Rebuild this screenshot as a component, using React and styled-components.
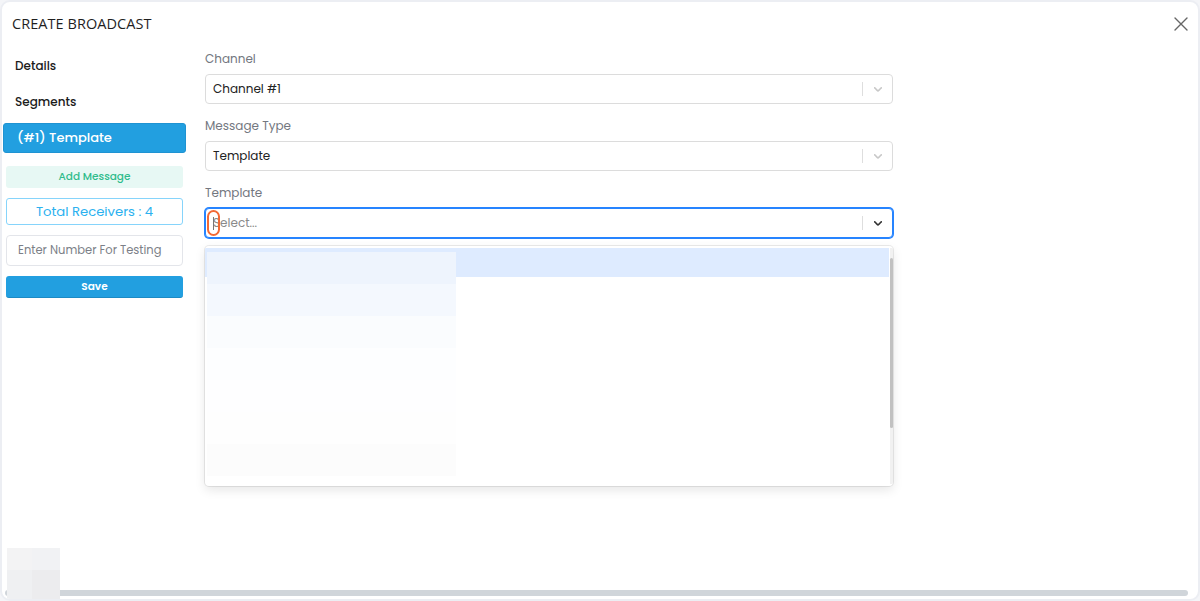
import React from "react";
import styled, { createGlobalStyle } from "styled-components";

const Global = createGlobalStyle`
  html, body { margin: 0; padding: 0; background: #f4f5f8; }
  body { font-family: "Poppins", "Noto Sans", "Open Sans", sans-serif; }
  * { box-sizing: border-box; }
`;

const Modal = styled.div`
  position: relative;
  width: 1200px;
  height: 601px;
  background: #fff;
  border: 2px solid #eceef3;
  border-radius: 10px;
  display: flex;
  flex-direction: column;
  overflow: hidden;
`;

const Header = styled.div`
  height: 43px;
  display: flex;
  align-items: center;
  justify-content: space-between;
  padding: 0 9px 0 10px;
`;

const Title = styled.h1`
  margin: 0;
  font-family: "Open Sans", sans-serif;
  font-size: 14.5px;
  font-weight: 400;
  color: #1f1f1f;
  letter-spacing: 0.05px;
`;

const Close = styled.button`
  border: 0;
  background: none;
  padding: 0;
  width: 16px;
  height: 16px;
  display: flex;
  align-items: center;
  justify-content: center;
  color: #666;
  cursor: pointer;
`;

const Body = styled.div`
  flex: 1;
  display: flex;
  min-height: 0;
`;

const Sidebar = styled.div`
  width: 184px;
  padding: 3px 0 0 1px;
  display: flex;
  flex-direction: column;
`;

const NavItem = styled.div`
  height: ${(p) => (p.$active ? "30px" : "36px")};
  display: flex;
  align-items: center;
  padding-left: ${(p) => (p.$active ? "13px" : "12px")};
  font-size: ${(p) => (p.$active ? "13px" : "12px")};
  font-weight: 500;
  color: ${(p) => (p.$active ? "#fff" : "#1b1b1b")};
  background: ${(p) => (p.$active ? "#229fe0" : "transparent")};
  border-radius: ${(p) => (p.$active ? "3px" : "0")};
  border: ${(p) => (p.$active ? "1px solid #1f93d2" : "0")};
  margin-top: ${(p) => (p.$active ? "3px" : "0")};
`;

const Actions = styled.div`
  display: flex;
  flex-direction: column;
  gap: 10px;
  padding: 13px 3px 0 3px;
`;

const AddMessage = styled.button`
  height: 22px;
  border: 0;
  border-radius: 3px;
  background: #e7f8f4;
  color: #2fbc8c;
  font-family: inherit;
  font-size: 10.5px;
  font-weight: 500;
`;

const Receivers = styled.div`
  height: 27px;
  border: 1px solid #86d4fb;
  border-radius: 3px;
  display: flex;
  align-items: center;
  justify-content: center;
  color: #2bb1ef;
  font-size: 13.2px;
`;

const TestInput = styled.input`
  height: 31px;
  border: 1px solid #e3e5ea;
  border-radius: 4px;
  padding: 0 11px;
  font-family: inherit;
  font-size: 11.5px;
  color: #333;
  outline: none;
  &::placeholder { color: #7c7f87; }
`;

const SaveButton = styled.button`
  height: 22px;
  border: 0;
  border-radius: 3px;
  background: #229fe0;
  border-bottom: 1px solid #1c8ac4;
  color: #fff;
  font-family: inherit;
  font-size: 10.5px;
  font-weight: 600;
`;

const Main = styled.div`
  flex: 1;
  padding: 6px 0 0 19px;
`;

const Form = styled.div`
  width: 688px;
  display: flex;
  flex-direction: column;
`;

const Label = styled.div`
  font-size: 12px;
  color: #737780;
  line-height: 16px;
  margin: ${(p) => (p.$first ? "0" : "14px")} 0 7px 0;
`;

const SelectBox = styled.div`
  position: relative;
  height: 30px;
  border: 1px solid ${(p) => (p.$focused ? "#2684ff" : "#dcdcdc")};
  box-shadow: ${(p) => (p.$focused ? "0 0 0 1px #2684ff" : "none")};
  border-radius: 4px;
  display: flex;
  align-items: center;
  background: #fff;
`;

const Value = styled.div`
  flex: 1;
  padding-left: 7px;
  font-size: 12px;
  color: ${(p) => (p.$placeholder ? "#8a8a8a" : "#222")};
`;

const Sep = styled.span`
  width: 1px;
  align-self: stretch;
  margin: 7px 0;
  background: #dedede;
`;

const Indicator = styled.div`
  width: 29px;
  display: flex;
  align-items: center;
  justify-content: center;
  color: ${(p) => (p.$dark ? "#333" : "#c8c8c8")};
`;

const Highlight = styled.span`
  position: absolute;
  left: 1px;
  top: 1px;
  width: 13px;
  height: 26px;
  border: 2px solid #f26a36;
  border-radius: 7px;
  z-index: 1;
  &::after {
    content: "";
    position: absolute;
    left: 4px;
    top: 5px;
    width: 1px;
    height: 13px;
    background: #777;
  }
`;

const Menu = styled.div`
  position: relative;
  margin-top: 8px;
  height: 240px;
  background: #fff;
  border-radius: 4px;
  box-shadow: 0 0 0 1px rgba(0, 0, 0, 0.08), 0 4px 11px rgba(0, 0, 0, 0.1);
  padding: 2px 0;
  overflow: hidden;
`;

const Option = styled.div`
  height: 29px;
  width: 684px;
  background: ${(p) => p.$bg};
`;

const Redact = styled.div`
  position: absolute;
  left: 2px;
  top: 6px;
  width: 249px;
  display: flex;
  flex-direction: column;
`;

const RedactRow = styled.div`
  height: 32px;
  background: ${(p) => p.$bg};
`;

const Scroll = styled.div`
  position: absolute;
  right: 0;
  top: 2px;
  bottom: 2px;
  width: 3px;
  background: #f1f1f1;
  &::after {
    content: "";
    position: absolute;
    left: 0;
    top: 10px;
    width: 3px;
    height: 170px;
    background: #c1c1c1;
    border-radius: 2px;
  }
`;

const Footer = styled.div`
  height: 40px;
  display: flex;
  align-items: flex-end;
  padding: 0 10px 3px 3px;
  position: relative;
`;

const HScroll = styled.div`
  flex: 1;
  height: 6px;
  border-radius: 3px;
  background: #d0d5da;
`;

const Blur = styled.div`
  position: absolute;
  left: 5px;
  bottom: -2px;
  width: 53px;
  height: 53px;
  display: grid;
  grid-template-columns: 25px 28px;
  grid-template-rows: 22px 31px;
  & > span:nth-child(1) { background: #f3f3f4; }
  & > span:nth-child(2) { background: #f1f2f4; }
  & > span:nth-child(3) { background: #eff0f2; }
  & > span:nth-child(4) { background: #ececee; }
`;

const Chevron = () => (
  <svg width="14" height="14" viewBox="0 0 20 20" fill="currentColor">
    <path d="M4.516 7.548c0.436-0.446 1.043-0.481 1.576 0l3.908 3.747 3.908-3.747c0.533-0.481 1.141-0.446 1.574 0 0.436 0.445 0.408 1.197 0 1.615-0.406 0.418-4.695 4.502-4.695 4.502-0.217 0.223-0.502 0.335-0.787 0.335s-0.57-0.112-0.789-0.335c0 0-4.287-4.084-4.695-4.502s-0.436-1.170 0-1.615z" />
  </svg>
);

function Select({ value, placeholder, focused }) {
  return (
    <SelectBox $focused={focused}>
      {focused && <Highlight />}
      <Value $placeholder={!!placeholder}>{value || placeholder}</Value>
      <Sep />
      <Indicator $dark={focused}>
        <Chevron />
      </Indicator>
    </SelectBox>
  );
}

export default function App() {
  const redactRows = ["#eef4fd", "#f4f8fe", "#fafcfe", "#fdfeff", "#fefeff", "#fefefe", "#fcfcfc"];
  return (
    <>
      <Global />
      <Modal>
        <Header>
          <Title>CREATE BROADCAST</Title>
          <Close aria-label="close">
            <svg width="14" height="14" viewBox="0 0 14 14" stroke="currentColor" strokeWidth="1.4" strokeLinecap="round">
              <path d="M1 1L13 13M13 1L1 13" />
            </svg>
          </Close>
        </Header>
        <Body>
          <Sidebar>
            <NavItem>Details</NavItem>
            <NavItem>Segments</NavItem>
            <NavItem $active>(#1) Template</NavItem>
            <Actions>
              <AddMessage>Add Message</AddMessage>
              <Receivers>Total Receivers : 4</Receivers>
              <TestInput placeholder="Enter Number For Testing" />
              <SaveButton>Save</SaveButton>
            </Actions>
          </Sidebar>
          <Main>
            <Form>
              <Label $first>Channel</Label>
              <Select value="Channel #1" />
              <Label>Message Type</Label>
              <Select value="Template" />
              <Label>Template</Label>
              <Select placeholder="Select..." focused />
              <Menu>
                <Option $bg="#deebff" />
                <Redact>
                  {redactRows.map((c, i) => (
                    <RedactRow key={i} $bg={c} />
                  ))}
                </Redact>
                <Scroll />
              </Menu>
            </Form>
          </Main>
        </Body>
        <Footer>
          <HScroll />
          <Blur>
            <span />
            <span />
            <span />
            <span />
          </Blur>
        </Footer>
      </Modal>
    </>
  );
}
